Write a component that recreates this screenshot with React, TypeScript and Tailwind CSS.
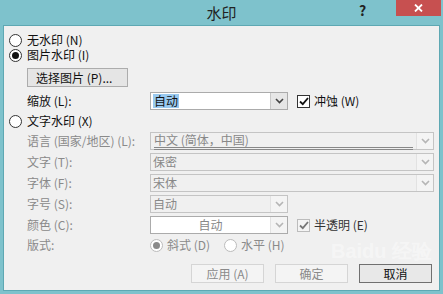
import type { ReactNode } from "react";

const Chevron = ({ disabled }: { disabled?: boolean }) => (
  <svg width="9" height="6" viewBox="0 0 9 6">
    <path
      d="M1 1 L4.5 4.5 L8 1"
      fill="none"
      stroke={disabled ? "#b5b5b5" : "#444"}
      strokeWidth="1.6"
    />
  </svg>
);

const Radio = ({ checked, disabled }: { checked?: boolean; disabled?: boolean }) => (
  <span
    className={`flex h-[13px] w-[13px] shrink-0 items-center justify-center rounded-full border bg-white ${
      disabled ? "border-[#bcbcbc] bg-[#f4f4f4]" : "border-[#333]"
    }`}
  >
    {checked && (
      <span className={`h-[7px] w-[7px] rounded-full ${disabled ? "bg-[#8a8a8a]" : "bg-[#111]"}`} />
    )}
  </span>
);

const Check = ({ disabled }: { disabled?: boolean }) => (
  <span
    className={`flex h-[13px] w-[13px] items-center justify-center border ${
      disabled ? "border-[#bcbcbc] bg-[#f4f4f4]" : "border-[#333] bg-white"
    }`}
  >
    <svg width="10" height="9" viewBox="0 0 10 9">
      <path
        d="M1 4.5 L3.8 7.2 L9 1"
        fill="none"
        stroke={disabled ? "#777" : "#111"}
        strokeWidth="1.8"
      />
    </svg>
  </span>
);

const Select = ({
  children,
  width,
  disabled,
  white,
  center,
}: {
  children: ReactNode;
  width: string;
  disabled?: boolean;
  white?: boolean;
  center?: boolean;
}) => (
  <div
    className={`flex h-[18px] shrink-0 items-stretch border ${width} ${
      disabled && !white ? "border-[#c4c4c4] bg-[#f0f0f0]" : "border-[#ababab] bg-white"
    }`}
  >
    <div
      className={`flex flex-1 items-center px-[2px] ${center ? "justify-center" : ""} ${
        disabled ? "text-[#888]" : "text-[#111]"
      }`}
    >
      {children}
    </div>
    <div
      className={`flex w-[17px] items-center justify-center border-l ${
        disabled ? "border-[#e2e2e2] bg-[#f4f4f4]" : "border-[#c8c8c8] bg-[#e6e6e6]"
      }`}
    >
      <Chevron disabled={disabled} />
    </div>
  </div>
);

const Row = ({ label, children }: { label: string; children: ReactNode }) => (
  <div className="flex h-[18px] items-center">
    <span className="w-[141px] shrink-0 whitespace-nowrap pl-[18px] text-[#8a8a8a]">{label}</span>
    {children}
  </div>
);

export default function App() {
  return (
    <div className="h-[294px] w-[443px] bg-[#7ec2cc] font-['Noto_Sans_CJK_SC',sans-serif] text-[12px] leading-[14px] text-[#111]">
      <div className="relative flex h-[25px] items-center justify-center">
        <span className="text-[15px] leading-[18px] text-[#222]">水印</span>
        <span className="absolute left-[359px] top-[2px] text-[14px] font-bold leading-[16px] text-[#222]">?</span>
        <div className="absolute left-[396px] top-0 flex h-[16px] w-[45px] items-center justify-center bg-[#c75050]">
          <svg width="9" height="8" viewBox="0 0 9 8">
            <path d="M1 0.5 L8 7.5 M8 0.5 L1 7.5" stroke="white" strokeWidth="1.8" />
          </svg>
        </div>
      </div>

      <div className="ml-[3px] h-[266px] w-[437px] whitespace-nowrap border border-[#5ea8b3] bg-[#f0f0f0] pl-[5px] pt-[7px]">
        <div className="flex h-[14px] items-center gap-[5px]">
          <Radio />
          <span>无水印 (N)</span>
        </div>
        <div className="mt-[1px] flex h-[14px] items-center gap-[5px]">
          <Radio checked />
          <span>图片水印 (I)</span>
        </div>
        <div className="ml-[18px] mt-[6px] flex h-[19px] w-[101px] items-center border border-[#acacac] bg-[#e5e5e5] pl-[8px]">
          选择图片 (P)...
        </div>
        <div className="mt-[5px] flex h-[18px] items-center">
          <span className="w-[141px] shrink-0 pl-[18px]">缩放 (L):</span>
          <Select width="w-[138px]">
            <span className="bg-[#99c9ef] px-[1px]">自动</span>
          </Select>
          <span className="ml-[9px]">
            <Check />
          </span>
          <span className="ml-[4px]">冲蚀 (W)</span>
        </div>
        <div className="mt-[4px] flex h-[14px] items-center gap-[5px]">
          <Radio />
          <span>文字水印 (X)</span>
        </div>

        <div className="mt-[4px] flex flex-col gap-[3px]">
          <Row label="语言 (国家/地区) (L):">
            <div className="flex h-[18px] w-[284px] shrink-0 items-stretch border border-[#c4c4c4] bg-[#f0f0f0]">
              <div className="flex flex-1 flex-col px-[3px] text-[#888]">
                <span className="leading-[13px]">中文 (简体，中国)</span>
                <span className="mt-[1px] h-[1px] bg-[#888]" />
                <span className="mt-[1px] h-[1px] bg-[#888]" />
              </div>
              <div className="flex w-[17px] items-center justify-center border-l border-[#e2e2e2] bg-[#f4f4f4]">
                <Chevron disabled />
              </div>
            </div>
          </Row>
          <Row label="文字 (T):">
            <Select width="w-[284px]" disabled>
              保密
            </Select>
          </Row>
          <Row label="字体 (F):">
            <Select width="w-[284px]" disabled>
              宋体
            </Select>
          </Row>
          <Row label="字号 (S):">
            <Select width="w-[138px]" disabled>
              自动
            </Select>
          </Row>
          <Row label="颜色 (C):">
            <Select width="w-[138px]" disabled white center>
              自动
            </Select>
            <span className="ml-[9px]">
              <Check disabled />
            </span>
            <span className="ml-[4px] text-[#333]">半透明 (E)</span>
          </Row>
          <div className="mt-[1px] flex h-[14px] items-center">
            <span className="w-[141px] shrink-0 pl-[18px] text-[#8a8a8a]">版式:</span>
            <Radio checked disabled />
            <span className="ml-[4px] text-[#8a8a8a]">斜式 (D)</span>
            <span className="ml-[14px]">
              <Radio disabled />
            </span>
            <span className="ml-[4px] text-[#8a8a8a]">水平 (H)</span>
          </div>
        </div>

        <div className="relative mt-[12px] flex justify-end gap-[11px] pr-[7px]">
          <div className="flex h-[19px] w-[73px] items-center justify-center border border-[#d5d5d5] bg-[#f4f4f4] text-[#8a8a8a]">
            应用 (A)
          </div>
          <div className="flex h-[19px] w-[73px] items-center justify-center border border-[#d5d5d5] bg-[#f4f4f4] text-[#8a8a8a]">
            确定
          </div>
          <div className="flex h-[19px] w-[73px] items-center justify-center border border-[#707070] bg-[#e8e8e8]">
            取消
          </div>
          <span className="pointer-events-none absolute left-[322px] top-[-20px] font-['Liberation_Sans',sans-serif] text-[20px] font-bold text-white/40">
            Baidu 经验
          </span>
        </div>
      </div>
    </div>
  );
}
